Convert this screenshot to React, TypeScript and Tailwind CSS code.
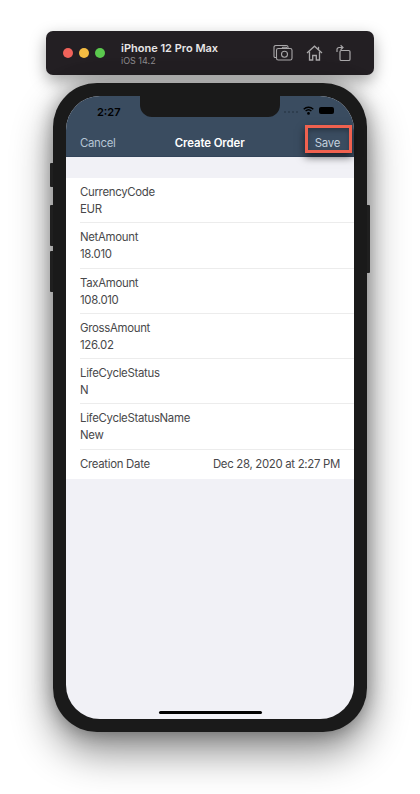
const rows = [
  { label: 'CurrencyCode', value: 'EUR' },
  { label: 'NetAmount', value: '18.010' },
  { label: 'TaxAmount', value: '108.010' },
  { label: 'GrossAmount', value: '126.02' },
  { label: 'LifeCycleStatus', value: 'N' },
  { label: 'LifeCycleStatusName', value: 'New' },
];

function SimulatorIcons() {
  return (
    <div className="flex items-center gap-[13px] text-[#a9a7a9]">
      <svg width="20" height="18" viewBox="0 0 20 18" fill="none" stroke="currentColor" strokeWidth="1.1">
        <path d="M3 13.5H2.2A1.2 1.2 0 0 1 1 12.3V3.2A1.7 1.7 0 0 1 2.7 1.5h10.6A1.7 1.7 0 0 1 15 3.2V4" />
        <rect x="3.5" y="4.5" width="15.5" height="11.5" rx="1.8" />
        <circle cx="11.5" cy="10.2" r="3" />
        <path d="M9 4.5l.8-1.2h3.4l.8 1.2" />
      </svg>
      <svg width="17" height="16" viewBox="0 0 17 16" fill="none" stroke="currentColor" strokeWidth="1.3">
        <path d="M1 8l7.5-6.8L16 8" />
        <path d="M3.5 6.5V15h3.2v-4.5h3.6V15h3.2V6.5" />
        <path d="M12.5 4.5V1.8" />
      </svg>
      <svg width="15" height="18" viewBox="0 0 15 18" fill="none" stroke="currentColor" strokeWidth="1.2">
        <rect x="4" y="6.5" width="10" height="10" rx="1.3" />
        <path d="M1 8V5.5A2 2 0 0 1 3 3.5h3" />
        <path d="M4.6 1.2L7 3.5 4.6 5.8" />
      </svg>
    </div>
  );
}

function StatusIcons() {
  return (
    <div className="flex items-center gap-[5px] absolute left-[218px] top-[10px]">
      <div className="flex gap-[2px]">
        <span className="w-[2px] h-[2px] mt-[3px] rounded-full bg-[#2b3a4a]" />
        <span className="w-[2px] h-[2px] mt-[3px] rounded-full bg-[#2b3a4a]" />
        <span className="w-[2px] h-[2px] mt-[3px] rounded-full bg-[#2b3a4a]" />
        <span className="w-[2px] h-[2px] mt-[3px] rounded-full bg-[#2b3a4a]" />
      </div>
      <svg width="11" height="9" viewBox="0 0 11 9" fill="none" stroke="#000" strokeWidth="1.4">
        <path d="M.7 3.2a7 7 0 0 1 9.6 0" />
        <path d="M2.6 5.1a4.3 4.3 0 0 1 5.8 0" />
        <circle cx="5.5" cy="7.4" r="0.7" fill="#000" />
      </svg>
      <div className="w-[15px] h-[7px] rounded-[2px] bg-black" />
    </div>
  );
}

export default function App() {
  return (
    <div className="relative w-[420px] h-[794px] bg-white overflow-hidden pt-[31px] font-['Inter',sans-serif]">
      {/* Simulator title bar */}
      <div className="mx-[46px] h-[44px] rounded-[7px] bg-[#231f23] shadow-[0_6px_16px_rgba(0,0,0,0.35)] flex items-center pl-[17px] pr-[23px]">
        <span className="w-[10px] h-[10px] rounded-full bg-[#f0625a]" />
        <span className="w-[10px] h-[10px] rounded-full bg-[#f5bc42] ml-[6px]" />
        <span className="w-[10px] h-[10px] rounded-full bg-[#5bc94e] ml-[6px]" />
        <div className="ml-[16px] flex-1">
          <div className="text-[11px] leading-[14px] font-semibold text-[#e8e6e8]">iPhone 12 Pro Max</div>
          <div className="text-[9px] leading-[11px] text-[#8e8c8e]">iOS 14.2</div>
        </div>
        <SimulatorIcons />
      </div>

      {/* Device */}
      <div className="relative mt-[8px] mx-[53px] h-[649px] rounded-[44px] bg-[#1a1a1a] p-[13px] shadow-[0_20px_40px_rgba(0,0,0,0.45),0_0_20px_rgba(0,0,0,0.35)]">
        <div className="absolute left-[-3px] top-[80px] w-[3px] h-[24px] rounded-l-[1px] bg-[#1f1f1f]" />
        <div className="absolute left-[-3px] top-[122px] w-[3px] h-[41px] rounded-l-[1px] bg-[#1f1f1f]" />
        <div className="absolute left-[-3px] top-[168px] w-[3px] h-[41px] rounded-l-[1px] bg-[#1f1f1f]" />
        <div className="absolute right-[-3px] top-[122px] w-[3px] h-[68px] rounded-r-[1px] bg-[#1f1f1f]" />

        <div className="relative h-[623px] rounded-[34px] overflow-hidden bg-[#f1f1f6] flex flex-col">
          <div className="absolute left-[74px] top-0 w-[140px] h-[21px] rounded-b-[12px] bg-[#1a1a1a] z-10" />

          <div className="relative h-[61px] shrink-0 bg-[#3a4c60] border-b border-[#33445a]">
            <div className="absolute left-[31px] top-[8px] text-[11px] leading-[16px] font-semibold text-black">2:27</div>
            <StatusIcons />
            <div className="absolute inset-x-0 top-[38px] flex items-center justify-between px-[14px] text-[11.4px] leading-[18px] tracking-[-0.3px]">
              <span className="text-[#b6c4d4]">Cancel</span>
              <span className="font-semibold text-white tracking-[-0.1px] pr-[11px]">Create Order</span>
              <span className="text-[#c3d0de]">Save</span>
            </div>
          </div>

          <div className="h-[21px] shrink-0" />

          <div className="bg-white text-[11.4px] tracking-[-0.3px] text-[#48484a]">
            {rows.map((row) => (
              <div key={row.label} className="pl-[14px]">
                <div className="h-[45.3px] border-b border-[#ececec] pt-[6px] leading-[17px]">
                  <div>{row.label}</div>
                  <div>{row.value}</div>
                </div>
              </div>
            ))}
            <div className="h-[29px] px-[14px] flex items-center justify-between">
              <span>Creation Date</span>
              <span>Dec 28, 2020 at 2:27 PM</span>
            </div>
          </div>

          <div className="absolute left-[93px] bottom-[5px] w-[103px] h-[3px] rounded-full bg-black" />
        </div>
      </div>

      {/* Highlight around Save */}
      <div className="absolute left-[305px] top-[125px] w-[47px] h-[28px] border-[3px] border-[#f0614f] shadow-[0_4px_8px_rgba(0,0,0,0.6),inset_0_3px_4px_rgba(0,0,0,0.25)]" />
    </div>
  );
}
